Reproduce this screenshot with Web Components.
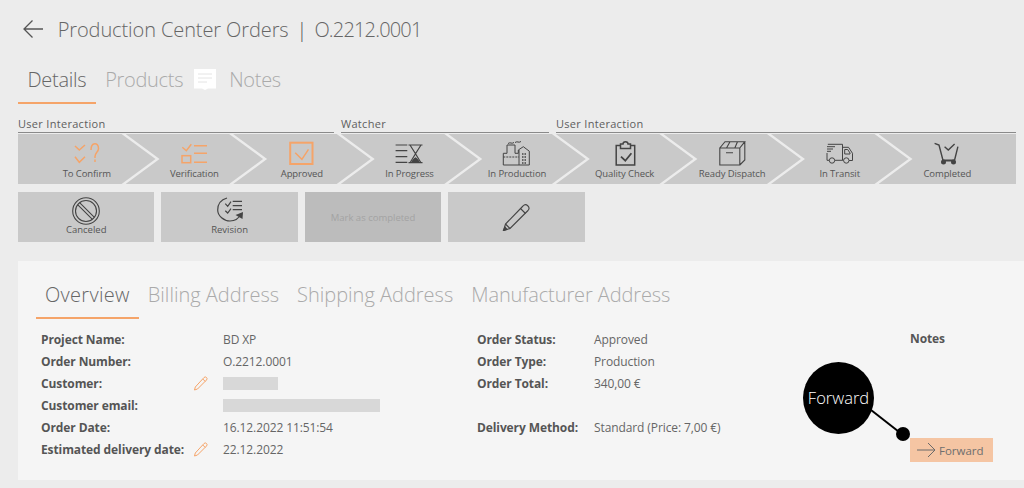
<!DOCTYPE html>
<html>
<head>
<meta charset="utf-8">
<title>Production Center Orders</title>
<style>
  html, body { margin: 0; height: 100%; overflow: hidden; }
  body { background: #ececec; font-family: "Open Sans", "Liberation Sans", sans-serif; color: #5a5a5a; }
  order-page { height: 488px; }
</style>
</head>
<body>
<order-page>
  <order-header slot="header">Production Center Orders</order-header>

  <tab-bar slot="tabs" style="--tab-pad:9.5px;--tab-h:44px;--tab-ls:-0.3px;--tab-pb:3px">
    <tab-item active>Details</tab-item>
    <tab-item>Products</tab-item>
    <svg width="22" height="21" viewBox="0 0 22 21" style="align-self:flex-start;margin:9px 3.5px 0 1.5px"><path fill="#fff" d="M0 0h22v19.500h-8l-3 1.500-3-1.500H0z"/><path stroke="#e4e4e4" d="M4 5h14M4 9h14M4 13h9"/></svg>
    <tab-item>Notes</tab-item>
  </tab-bar>

  <work-flow slot="flow">
    <flow-group label="User Interaction" style="width:316px"></flow-group>
    <flow-group label="Watcher" style="width:208px"></flow-group>
    <flow-group label="User Interaction" style="flex:1"></flow-group>

    <flow-step slot="steps" first accent label="To Confirm">
      <svg viewBox="0 0 30 28" fill="none" stroke="#f5a469" stroke-width="1.500"><path d="M3 7l4.300 4L13 6M3 17.700l4.300 5.600 5.700-5.600"/><path d="M19 11c0-8 7.500-8 7.500-1.500 0 3.500-3.500 4-3.500 8v1.500M23 20.500v2.500"/></svg>
    </flow-step>
    <flow-step slot="steps" accent label="Verification">
      <svg viewBox="0 0 30 28" fill="none" stroke="#f5a469" stroke-width="1.500"><path d="M3.300 8.300l4 3.400 5-6.400"/><rect x="3" y="16.700" width="8.700" height="7"/><path d="M15 6.700h13M15 14.300h13M15 23.300h13"/></svg>
    </flow-step>
    <flow-step slot="steps" accent label="Approved">
      <svg viewBox="0 0 30 28" fill="none" stroke="#f5a469"><rect x="3.200" y="3.700" width="22.300" height="21.300" stroke-width="2"/><path stroke-width="1.500" d="M8.200 13.700l6.700 6.600 6.600-10"/></svg>
    </flow-step>
    <flow-step slot="steps" label="In Progress">
      <svg viewBox="0 0 30 28" fill="none" stroke="#444" stroke-width="1.200"><path d="M1.600 6h11.700M1.600 11.700h11.700M1.600 17.700h11.700M1.600 23.300h11.700M14.500 6h14M14.500 23.700h14M16 6l5.500 8.800L16 23.700M27 6l-5.500 8.800 5.500 8.900"/><path fill="#444" stroke="none" d="M17 23.700c1-3 3-4.500 4.500-5.500 1.500 1 3.500 2.500 4.500 5.500z"/></svg>
    </flow-step>
    <flow-step slot="steps" label="In Production">
      <svg viewBox="0 0 30 28" fill="none" stroke="#444" stroke-width="1"><path d="M1.300 26V14.300H5V6h8v8.300h3.300V11l5-3.300 6 4.500V26z"/><path d="M1.300 18H17" stroke-dasharray="2 1"/><path d="M17 11v15"/><path d="M20 15h5M20 18h5M20 21h5M20 24h5" stroke-dasharray="1.500 1" stroke-width="1.300"/><path d="M6 4.500c3-2 3 1 6-1M13 3.500c3-2 3 1 6-1"/></svg>
    </flow-step>
    <flow-step slot="steps" label="Quality Check">
      <svg viewBox="0 0 30 28" fill="none" stroke="#444"><path stroke-width="1.500" d="M10 6.500H6.200V26h18.500V6.500H21"/><path stroke-width="1.500" d="M10.500 9.500V5H13c0-3 5-3 5 0h2.500v4.500z"/><path stroke-width="1.800" d="M11 17.700l4.300 4 6.100-7.400"/></svg>
    </flow-step>
    <flow-step slot="steps" label="Ready Dispatch">
      <svg viewBox="0 0 30 28" fill="none" stroke="#444" stroke-width="1.100"><path d="M2.800 9h20v17h-20zM2.800 9L8 2.700h19.800L22.800 9M22.800 26l5-5V2.700M9.500 9L13 2.700M17.800 9l2.700-6.300M9 13.700h7"/></svg>
    </flow-step>
    <flow-step slot="steps" label="In Transit">
      <svg viewBox="0 0 30 28" fill="none" stroke="#444" stroke-width="1"><path d="M2.800 5.300h14.700v16H9.700M2 14v7.300h2.300M2 7.700h8M2 10h6M2 12.300h4M17.500 8.300h6l4 6v7.200H24M17.500 21.300h1"/><path d="M19.700 10.500h3l2.300 3.500v1h-5.300z"/><circle cx="7" cy="21.500" r="2.700"/><circle cx="21.300" cy="21.500" r="2.700"/></svg>
    </flow-step>
    <flow-step slot="steps" last label="Completed">
      <svg viewBox="0 0 30 28" fill="none" stroke="#444" stroke-width="1.400"><path d="M2.600 4.300L7 6l3.900 15M25.900 7.700L22.600 21"/><path d="M12.600 7.700l3.700 3.300L22.600 5"/><path stroke-width="2.200" d="M10.500 21.500h12.500"/><circle cx="11.500" cy="23" r="1.800" fill="#444"/><circle cx="21.500" cy="23" r="1.800" fill="#444"/></svg>
    </flow-step>
  </work-flow>

  <action-row slot="actions">
    <action-button label="Canceled">
      <svg width="28" height="28" viewBox="0 0 28 28" fill="none" stroke="#444" stroke-width="1.100"><circle cx="14" cy="14" r="13.300"/><circle cx="14" cy="14" r="10.500"/><path d="M7.600 5.600l14.800 14.800M5.600 7.600l14.800 14.800"/></svg>
    </action-button>
    <action-button label="Revision">
      <svg width="26" height="25" viewBox="0 0 26 25" fill="none" stroke="#444" stroke-width="1.200"><path d="M10 1C3 3 .7 8 .7 13 .7 19 7 24 13 24c5 0 9-3 11-7"/><path fill="#444" stroke="none" d="M18.500 18l7.500-3-.5 7z"/><path d="M8.300 6.700l2.400 2.600L14 4.700M8.300 13.700l2.400 2.300 3.300-4.300M15.700 4.300H25M15.700 8.700H25M15.700 12.700H25"/></svg>
    </action-button>
    <action-button disabled label="Mark as completed"></action-button>
    <action-button>
      <svg width="28" height="27" viewBox="0 0 28 27" fill="none" stroke="#444" stroke-width="1.100"><path d="M21 2a3 3 0 0 1 5 4.500L8 24.500l-6.500 2 2-6.500z"/><path d="M18.500 4.500l5 5M3.500 20l4.500 4.500"/><path d="M3 23l-1.500 3.500L5 25.500z" fill="#444"/></svg>
    </action-button>
  </action-row>

  <order-card slot="card">
    <tab-bar slot="tabs" style="--tab-pad:9px;--tab-h:47px;--tab-extra:9px;--tab-ls:0">
      <tab-item active style="--tab-ls:.3px">Overview</tab-item>
      <tab-item>Billing Address</tab-item>
      <tab-item>Shipping Address</tab-item>
      <tab-item style="--tab-ls:-.1px">Manufacturer Address</tab-item>
    </tab-bar>

    <field-list slot="left" style="--label-w:182px">
      <field-row label="Project Name:">BD XP</field-row>
      <field-row label="Order Number:">O.2212.0001</field-row>
      <field-row label="Customer:" editable><redacted-bar style="width:55px"></redacted-bar></field-row>
      <field-row label="Customer email:"><redacted-bar style="width:157px"></redacted-bar></field-row>
      <field-row label="Order Date:">16.12.2022 11:51:54</field-row>
      <field-row label="Estimated delivery date:" editable>22.12.2022</field-row>
    </field-list>

    <field-list slot="middle" style="--label-w:117px">
      <field-row label="Order Status:">Approved</field-row>
      <field-row label="Order Type:">Production</field-row>
      <field-row label="Order Total:">340,00 €</field-row>
      <field-row label=""></field-row>
      <field-row label="Delivery Method:">Standard (Price: 7,00 €)</field-row>
    </field-list>

    <notes-panel slot="right"></notes-panel>
  </order-card>
</order-page>

<script>
function tpl(html) {
  const t = document.createElement("template");
  t.innerHTML = html;
  return t;
}

class Base extends HTMLElement {
  constructor() {
    super();
    this.attachShadow({ mode: "open" });
    this.shadowRoot.appendChild(this.constructor.template.content.cloneNode(true));
  }
}

class OrderPage extends Base {
  static template = tpl(`
    <style>
      :host { display: flex; flex-direction: column; padding: 0 0 0 18px; box-sizing: border-box; }
    </style>
    <slot name="header"></slot>
    <slot name="tabs"></slot>
    <slot name="flow"></slot>
    <slot name="actions"></slot>
    <slot name="card"></slot>
  `);
}

class OrderHeader extends Base {
  static template = tpl(`
    <style>
      :host { display: flex; align-items: center; height: 58px; padding-bottom: 2px; gap: 15px; font-size: 20px; font-weight: 300; color: #666; white-space: pre; }
      svg { margin-left: 4.7px; }
      .name { letter-spacing: -0.1px; }
      .sep { margin: 0 7px 0 8px; color: #555; }
      .num { letter-spacing: -0.82px; }
    </style>
    <svg width="20" height="18" viewBox="0 0 20 18" fill="none" stroke="#555" stroke-width="1.300"><path d="M20 9H1M9.500.5L1 9l8.500 8.500"/></svg>
    <span><span class="name"><slot></slot></span><span class="sep">|</span><span class="num">O.2212.0001</span></span>
  `);
}

class TabBar extends Base {
  static template = tpl(`
    <style>
      :host { display: flex; align-items: stretch; height: var(--tab-h, 46px); padding-left: var(--tab-extra, 0); }
    </style>
    <slot></slot>
  `);
}

class TabItem extends Base {
  static template = tpl(`
    <style>
      :host { display: flex; align-items: center; padding: 0 var(--tab-pad, 10px) var(--tab-pb, 0); font-size: 20px; font-weight: 300; color: #aaa; letter-spacing: var(--tab-ls, 0); border-bottom: 2px solid transparent; box-sizing: border-box; }
      :host([active]) { color: #666; border-bottom-color: #f5a469; }
    </style>
    <slot></slot>
  `);
}

class WorkFlow extends Base {
  static template = tpl(`
    <style>
      :host { display: block; width: 998px; }
      .groups { display: flex; gap: 7px; }
      .steps { display: flex; margin-top: 1px; }
    </style>
    <div class="groups"><slot></slot></div>
    <div class="steps"><slot name="steps"></slot></div>
  `);
}

class FlowGroup extends Base {
  static template = tpl(`
    <style>
      :host { display: block; height: 29px; box-sizing: border-box; border-bottom: 1px solid #8a8a8a; font-size: 11px; line-height: 15px; padding-top: 12px; color: #5e5e5e; letter-spacing: .3px; }
    </style>
    <span></span>
  `);
  connectedCallback() {
    this.shadowRoot.querySelector("span").textContent = this.getAttribute("label");
  }
}

class FlowStep extends Base {
  static template = tpl(`
    <style>
      :host { flex: 1 1 0; min-width: 0; height: 50px; display: flex; flex-direction: column; align-items: center; background: #c9c9c9; margin-left: -30px; color: #555;
        clip-path: polygon(0 0, calc(100% - 34px) 0, 100% 50%, calc(100% - 34px) 100%, 0 100%, 34px 50%); }
      :host([first]) { margin-left: 0; clip-path: polygon(0 0, calc(100% - 34px) 0, 100% 50%, calc(100% - 34px) 100%, 0 100%); }
      :host([last]) { clip-path: polygon(0 0, 100% 0, 100% 100%, 0 100%, 34px 50%); }
      .icon { height: 33px; width: 30px; padding-top: 5px; box-sizing: border-box; }
      ::slotted(svg) { display: block; width: 30px; height: 28px; }
      span { font-size: 9.500px; line-height: 13px; white-space: nowrap; letter-spacing: -0.1px; }
    </style>
    <div class="icon"><slot></slot></div>
    <span></span>
  `);
  connectedCallback() {
    this.shadowRoot.querySelector("span").textContent = this.getAttribute("label");
  }
}

class ActionRow extends Base {
  static template = tpl(`
    <style>
      :host { display: flex; gap: 7px; margin-top: 8px; }
    </style>
    <slot></slot>
  `);
}

class ActionButton extends Base {
  static template = tpl(`
    <style>
      :host { display: flex; flex-direction: column; align-items: center; width: 136.400px; height: 50px; background: #c9c9c9; color: #555; font-size: 9.500px; line-height: 13px; box-sizing: border-box; }
      .icon { height: 31px; padding-top: 5px; box-sizing: border-box; }
      :host(:not([label])) .icon { height: 50px; padding-top: 0; display: flex; align-items: center; }
      :host([disabled]) { background: #bcbcbc; color: #a3a3a3; justify-content: center; }
      :host([disabled]) .icon { display: none; }
      span:empty { display: none; }
      ::slotted(svg) { display: block; }
    </style>
    <div class="icon"><slot></slot></div>
    <span></span>
  `);
  connectedCallback() {
    this.shadowRoot.querySelector("span").textContent = this.getAttribute("label") || "";
  }
}

class OrderCard extends Base {
  static template = tpl(`
    <style>
      :host { display: block; position: relative; margin-top: 19px; height: 219px; background: #f5f5f5; padding: 11px 0 0 9px; box-sizing: border-box; }
      .cols { display: flex; padding: 9px 0 0 14px; }
      .left { width: 436px; }
      .middle { width: 433px; }
    </style>
    <slot name="tabs"></slot>
    <div class="cols">
      <div class="left"><slot name="left"></slot></div>
      <div class="middle"><slot name="middle"></slot></div>
      <div class="right"><slot name="right"></slot></div>
    </div>
  `);
}

class FieldList extends Base {
  static template = tpl(`
    <style>
      :host { display: grid; grid-auto-rows: 22px; font-size: 12px; }
    </style>
    <slot></slot>
  `);
}

class FieldRow extends Base {
  static template = tpl(`
    <style>
      :host { display: flex; align-items: center; white-space: nowrap; }
      b { width: var(--label-w, 182px); flex: none; font-weight: 700; color: #555; letter-spacing: -0.1px; display: flex; justify-content: space-between; align-items: center; }
      svg { margin-right: 15px; display: none; }
      :host([editable]) svg { display: block; }
      div { color: #666; letter-spacing: -0.1px; }
    </style>
    <b><span></span><svg width="15" height="15" viewBox="0 0 15 15" fill="none" stroke="#f5a469" stroke-width="1"><path d="M11 1.500a1.700 1.700 0 0 1 2.500 2.500L4.500 13l-3 1 .8-3z"/><path d="M9.800 3l2.500 2.500"/></svg></b>
    <div><slot></slot></div>
  `);
  connectedCallback() {
    this.shadowRoot.querySelector("span").textContent = this.getAttribute("label");
  }
}

class RedactedBar extends Base {
  static template = tpl(`
    <style>
      :host { display: block; height: 13px; background: #d8d8d8; }
    </style>
  `);
}

class NotesPanel extends Base {
  static template = tpl(`
    <style>
      :host { display: block; font-size: 12px; }
      b { display: block; line-height: 22px; color: #555; letter-spacing: -0.1px; }
      .fwd { position: absolute; left: 892px; top: 177px; width: 83px; height: 24px; background: #f5c5a3; color: #6e6e6e; display: flex; align-items: center; gap: 3px; padding-left: 7px; box-sizing: border-box; font-size: 11.500px; }
      .tip { position: absolute; left: 785px; top: 101px; width: 71px; height: 72px; padding-bottom: 2px; box-sizing: border-box; border-radius: 50%; background: #000; color: #fff; font-size: 16.500px; font-weight: 300; display: flex; align-items: center; justify-content: center; }
      .link { position: absolute; left: 850px; top: 140px; }
    </style>
    <b>Notes</b>
    <svg class="link" width="70" height="50" viewBox="0 0 70 50"><path d="M3 9l32 25" stroke="#000" stroke-width="2"/><circle cx="35" cy="33" r="7"/></svg>
    <div class="tip">Forward</div>
    <div class="fwd"><svg width="19" height="16" viewBox="0 0 19 16" fill="none" stroke="#6a6a6a"><path d="M0 8h18M11 1l7 7-7 7"/></svg>Forward</div>
  `);
}

customElements.define("order-page", OrderPage);
customElements.define("order-header", OrderHeader);
customElements.define("tab-bar", TabBar);
customElements.define("tab-item", TabItem);
customElements.define("work-flow", WorkFlow);
customElements.define("flow-group", FlowGroup);
customElements.define("flow-step", FlowStep);
customElements.define("action-row", ActionRow);
customElements.define("action-button", ActionButton);
customElements.define("order-card", OrderCard);
customElements.define("field-list", FieldList);
customElements.define("field-row", FieldRow);
customElements.define("redacted-bar", RedactedBar);
customElements.define("notes-panel", NotesPanel);
</script>
</body>
</html>
